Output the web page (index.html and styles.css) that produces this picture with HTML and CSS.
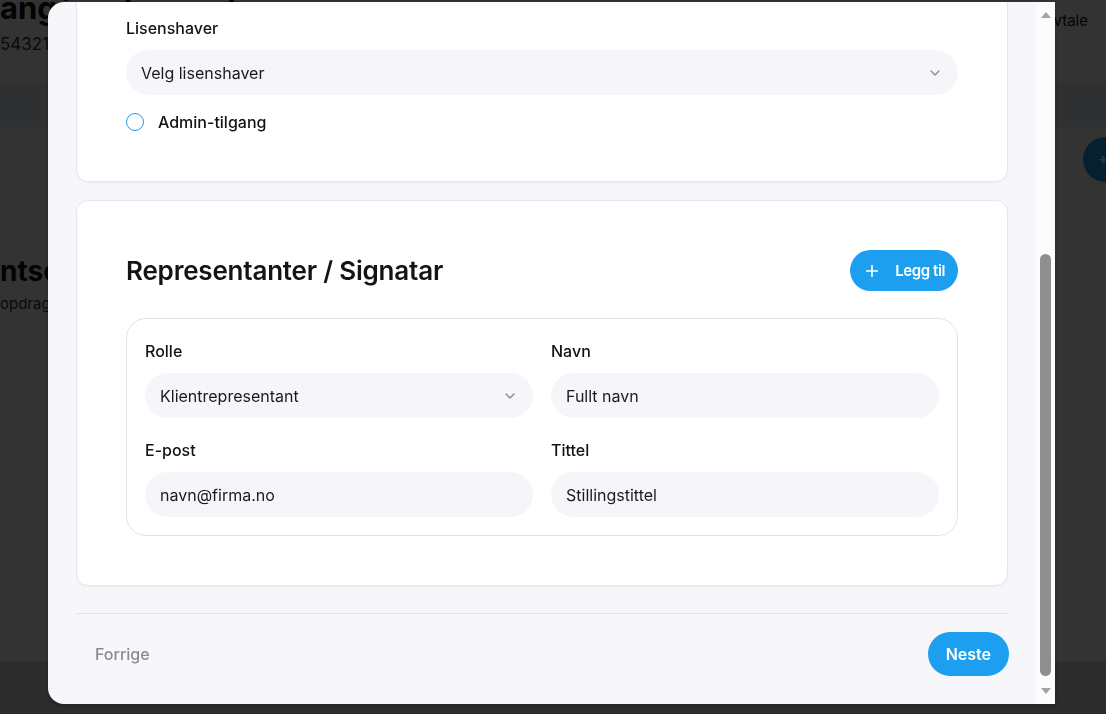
FILE: index.html
```html
<!DOCTYPE html>
<html lang="no">
<head>
<meta charset="utf-8">
<title>Ny klient</title>
<link rel="stylesheet" href="styles.css">
</head>
<body>
<div class="page">
  <header class="topbar">
    <div class="topbar-left">
      <h1 class="page-title">angående oppdrag</h1>
      <div class="page-sub">543210 · Solberg Handel AS</div>
    </div>
    <div class="topbar-right">Ny avtale</div>
  </header>
  <nav class="tabs"></nav>
  <main class="content">
    <div class="content-head">
      <span class="new-btn">+ Ny</span>
    </div>
    <section class="section">
      <h2 class="section-title">ntsoversikt</h2>
      <p class="section-sub">opdrag og avtaler</p>
    </section>
  </main>
  <footer class="page-foot"></footer>
</div>

<div class="overlay">
  <div class="modal">
    <div class="modal-main">
      <div class="modal-body">
        <div class="modal-head">
          <h2 class="modal-title">Ny klient</h2>
          <p class="modal-sub">Steg 2 av 3 – Tilganger og representanter</p>
        </div>
        <section class="card">
          <h3 class="card-title">Tilgang</h3>
          <div class="field">
            <label class="label">Organisasjonsnummer</label>
            <div class="input">999 999 999</div>
          </div>
          <div class="field">
            <label class="label">Lisenshaver</label>
            <div class="input select">
              <span>Velg lisenshaver</span>
              <svg class="chev" width="10" height="6" viewBox="0 0 10 6"><path d="M1 1l4 4 4-4" fill="none" stroke="#8a8a8f" stroke-width="1.4" stroke-linecap="round" stroke-linejoin="round"/></svg>
            </div>
          </div>
          <div class="radio-row">
            <span class="radio"></span>
            <span class="radio-label">Admin-tilgang</span>
          </div>
        </section>

        <section class="card card-reps">
          <div class="card-head">
            <h2 class="reps-title">Representanter / Signatar</h2>
            <button class="btn-add">
              <svg width="12" height="12" viewBox="0 0 12 12"><path d="M6 0.5v11M0.5 6h11" stroke="#fff" stroke-width="1.6" stroke-linecap="round"/></svg>
              <span>Legg til</span>
            </button>
          </div>
          <div class="reps">
            <div class="field">
              <label class="label">Rolle</label>
              <div class="input select">
                <span>Klientrepresentant</span>
                <svg class="chev" width="10" height="6" viewBox="0 0 10 6"><path d="M1 1l4 4 4-4" fill="none" stroke="#8a8a8f" stroke-width="1.4" stroke-linecap="round" stroke-linejoin="round"/></svg>
              </div>
            </div>
            <div class="field">
              <label class="label">Navn</label>
              <div class="input">Fullt navn</div>
            </div>
            <div class="field">
              <label class="label">E-post</label>
              <div class="input">navn@firma.no</div>
            </div>
            <div class="field">
              <label class="label">Tittel</label>
              <div class="input">Stillingstittel</div>
            </div>
          </div>
        </section>
      </div>
      <div class="modal-foot">
        <button class="btn-ghost">Forrige</button>
        <button class="btn-primary">Neste</button>
      </div>
    </div>
    <div class="scrollbar">
      <div class="sb-btn"><span class="tri-up"></span></div>
      <div class="sb-track"><div class="sb-thumb"></div></div>
      <div class="sb-btn sb-btn-down"><span class="tri-down"></span></div>
    </div>
  </div>
</div>
</body>
</html>
```

FILE: styles.css
```css
* { box-sizing: border-box; }

html, body {
  margin: 0;
  padding: 0;
  width: 1106px;
  height: 714px;
  overflow: hidden;
  font-family: Inter, "Noto Sans", "Liberation Sans", sans-serif;
  color: #151515;
}

button {
  font-family: inherit;
  border: none;
  cursor: pointer;
}

/* ---------- background page ---------- */
.page {
  width: 1106px;
  height: 714px;
  background: #ffffff;
  display: flex;
  flex-direction: column;
}

.topbar {
  height: 82px;
  display: flex;
  justify-content: space-between;
  align-items: flex-start;
  background: #ffffff;
}

.topbar-left {
  display: flex;
  flex-direction: column;
}

.page-title {
  margin: -11px 0 0 0;
  font-size: 31px;
  line-height: 38px;
  font-weight: 700;
  color: #111;
  white-space: nowrap;
}

.page-sub {
  margin-top: 6px;
  font-size: 17px;
  line-height: 22px;
  color: #333;
  white-space: nowrap;
}

.topbar-right {
  margin-top: 10px;
  padding-right: 18px;
  font-size: 15px;
  line-height: 22px;
  color: #111;
}

.tabs {
  height: 45px;
  background: #eceef2;
}

.content {
  flex: 1;
  display: flex;
  flex-direction: column;
}

.content-head {
  height: 80px;
  display: flex;
  justify-content: flex-end;
  padding-top: 10px;
  margin-right: -41px;
}

.new-btn {
  height: 45px;
  width: 64px;
  border-radius: 23px;
  background: #1d9ff0;
  color: #fff;
  font-size: 15px;
  font-weight: 600;
  display: flex;
  align-items: center;
  justify-content: center;
}

.section {
  padding-top: 47px;
}

.section-title {
  margin: 0;
  font-size: 28px;
  line-height: 34px;
  font-weight: 700;
  color: #111;
  white-space: nowrap;
}

.section-sub {
  margin: 5px 0 0 0;
  font-size: 15px;
  line-height: 22px;
  color: #333;
  white-space: nowrap;
}

.page-foot {
  height: 52px;
  background: #d9d9db;
}

/* ---------- overlay + modal ---------- */
.overlay {
  position: fixed;
  inset: 0;
  background: rgba(0, 0, 0, 0.8);
  display: flex;
  align-items: flex-start;
  padding: 2px 0 0 48px;
}

.modal {
  width: 1007px;
  height: 702px;
  display: flex;
  background: #f7f7fb;
  border-radius: 16px 0 0 16px;
  overflow: hidden;
  box-shadow: 0 2px 4px rgba(0, 0, 0, 0.25);
}

.modal-main {
  flex: 1;
  min-width: 0;
  display: flex;
  flex-direction: column;
  justify-content: flex-end;
  overflow: hidden;
}

.modal-body {
  padding: 0 28px;
  display: flex;
  flex-direction: column;
  gap: 18px;
}

.modal-head {
  padding: 28px 0 8px;
}

.modal-title {
  margin: 0;
  font-size: 26px;
  font-weight: 600;
}

.modal-sub {
  margin: 6px 0 0;
  font-size: 15px;
  color: #777;
}

.card {
  background: #ffffff;
  border: 1px solid #e4e6ec;
  border-radius: 12px;
  padding: 48px 49px;
  display: flex;
  flex-direction: column;
  box-shadow: 0 1px 2px rgba(16, 24, 40, 0.04);
}

.card-reps {
  padding: 49px;
}

.card-title {
  margin: 0 0 24px;
  font-size: 20px;
  font-weight: 600;
}

.card > .field + .field {
  margin-top: 20px;
}

.field {
  display: flex;
  flex-direction: column;
}

.label {
  display: block;
  font-size: 16px;
  line-height: 22px;
  font-weight: 500;
  color: #131313;
  margin-bottom: 11px;
}

.input {
  height: 45px;
  border-radius: 23px;
  background: #f6f6fa;
  padding: 0 15px;
  display: flex;
  align-items: center;
  font-size: 16px;
  color: #1a1a1a;
}

.select {
  justify-content: space-between;
  padding-right: 18px;
}

.chev {
  display: block;
}

.radio-row {
  margin-top: 16px;
  display: flex;
  align-items: center;
  gap: 14px;
  height: 22px;
}

.radio {
  width: 18px;
  height: 18px;
  border-radius: 50%;
  border: 1.5px solid #1d9ff0;
  background: #fff;
}

.radio-label {
  font-size: 16px;
  line-height: 22px;
  font-weight: 500;
  color: #131313;
}

.card-head {
  height: 41px;
  display: flex;
  justify-content: space-between;
  align-items: center;
}

.reps-title {
  margin: 0;
  font-size: 26px;
  line-height: 32px;
  font-weight: 600;
  letter-spacing: -0.2px;
  color: #141414;
}

.btn-add {
  height: 41px;
  padding: 0 13px 0 16px;
  border-radius: 21px;
  background: #1d9ff0;
  color: #fff;
  font-size: 15px;
  font-weight: 600;
  letter-spacing: -0.4px;
  display: flex;
  align-items: center;
  gap: 17px;
}

.reps {
  margin-top: 27px;
  border: 1px solid #dbe5ed;
  border-radius: 20px;
  padding: 21px 18px 18px;
  display: grid;
  grid-template-columns: 1fr 1fr;
  gap: 21px 18px;
}

.modal-foot {
  margin: 27px 28px 0;
  border-top: 1px solid #dfe4ea;
  padding: 18px 0 28px;
  display: flex;
  justify-content: space-between;
  align-items: center;
}

.btn-ghost {
  height: 44px;
  padding: 0 19px;
  background: transparent;
  font-size: 16px;
  font-weight: 500;
  color: #8b8b90;
}

.btn-primary {
  height: 44px;
  padding: 0 18px;
  border-radius: 22px;
  background: #1d9ff0;
  color: #fff;
  font-size: 16px;
  font-weight: 600;
  margin-right: -1px;
}

/* ---------- scrollbar ---------- */
.scrollbar {
  width: 19px;
  flex: none;
  background: #fcfcfc;
  display: flex;
  flex-direction: column;
}

.sb-btn {
  height: 26px;
  display: flex;
  align-items: center;
  justify-content: center;
}

.sb-btn-down {
  height: 27px;
}

.tri-up {
  width: 0;
  height: 0;
  border-left: 5px solid transparent;
  border-right: 5px solid transparent;
  border-bottom: 6px solid #a3a3a3;
}

.tri-down {
  width: 0;
  height: 0;
  border-left: 5px solid transparent;
  border-right: 5px solid transparent;
  border-top: 6px solid #a3a3a3;
}

.sb-track {
  flex: 1;
  display: flex;
  flex-direction: column;
  justify-content: flex-end;
  align-items: center;
  padding-bottom: 1px;
}

.sb-thumb {
  width: 11px;
  height: 422px;
  border-radius: 6px;
  background: #8f8f8f;
}
```
